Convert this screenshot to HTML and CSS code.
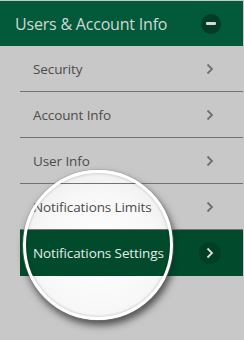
FILE: index.html
```html
<!DOCTYPE html>
<html>
<head>
<meta charset="utf-8">
<link rel="stylesheet" href="styles.css">
</head>
<body>
<div class="panel">
  <div class="header">
    <span class="title">Users &amp; Account Info</span>
    <span class="toggle"><span class="minus"></span></span>
  </div>
  <ul class="menu">
    <li class="item"><span class="label">Security</span><svg class="chev" viewBox="0 0 8 12" width="8" height="12"><path d="M1.5 1.5 L6 6 L1.5 10.5" fill="none" stroke="currentColor" stroke-width="1.8"/></svg></li>
    <li class="item"><span class="label">Account Info</span><svg class="chev" viewBox="0 0 8 12" width="8" height="12"><path d="M1.5 1.5 L6 6 L1.5 10.5" fill="none" stroke="currentColor" stroke-width="1.8"/></svg></li>
    <li class="item"><span class="label">User Info</span><svg class="chev" viewBox="0 0 8 12" width="8" height="12"><path d="M1.5 1.5 L6 6 L1.5 10.5" fill="none" stroke="currentColor" stroke-width="1.8"/></svg></li>
    <li class="item"><span class="label">Notifications Limits</span><svg class="chev" viewBox="0 0 8 12" width="8" height="12"><path d="M1.5 1.5 L6 6 L1.5 10.5" fill="none" stroke="currentColor" stroke-width="1.8"/></svg></li>
    <li class="item active"><span class="label">Notifications Settings</span><span class="chev-wrap"><svg class="chev" viewBox="0 0 8 12" width="8" height="12"><path d="M1.5 1.5 L6 6 L1.5 10.5" fill="none" stroke="currentColor" stroke-width="1.8"/></svg></span></li>
  </ul>
  <div class="lens-fill"></div>
  <div class="lens-ring"></div>
</div>
</body>
</html>
```
FILE: styles.css
```css
html, body {
  margin: 0;
  padding: 0;
  background: #c8c8c8;
  width: 244px;
  height: 340px;
  overflow: hidden;
}
body {
  padding-top: 1px;
  font-family: "Open Sans", "DejaVu Sans", sans-serif;
}
.panel {
  position: relative;
  width: 243px;
  height: 339px;
}
.header {
  height: 45px;
  background: #025a3b;
  display: flex;
  align-items: center;
  justify-content: space-between;
  padding: 0 22px 0 15px;
  box-sizing: border-box;
}
.title {
  color: #cfd8d4;
  font-size: 16px;
  letter-spacing: -0.2px;
}
.toggle {
  width: 20px;
  height: 20px;
  border-radius: 50%;
  background: #013d26;
  display: flex;
  align-items: center;
  justify-content: center;
}
.minus {
  width: 10px;
  height: 3px;
  border-radius: 1px;
  background: #d8d8d8;
}
.menu {
  list-style: none;
  margin: 0 0 0 20px;
  padding: 0;
  position: relative;
  z-index: 2;
}
.item {
  height: 45px;
  border-bottom: 1px solid #727272;
  display: flex;
  align-items: center;
  justify-content: space-between;
  padding: 0 29px 0 13px;
  color: #4c4c4c;
  font-size: 13.5px;
  letter-spacing: -0.1px;
}
.chev {
  color: #707070;
  display: block;
}
.item.active {
  background: #014a2c;
  border-bottom: none;
  height: 46px;
  color: #e4ece8;
  padding-right: 22px;
}
.chev-wrap {
  width: 22px;
  height: 22px;
  border-radius: 50%;
  background: #013f25;
  display: flex;
  align-items: center;
  justify-content: center;
}
.item.active .chev {
  color: #d8dcda;
}
.lens-fill {
  position: absolute;
  left: 23px;
  top: 169px;
  width: 150px;
  height: 150px;
  border-radius: 50%;
  background: radial-gradient(circle at 50% 55%, #ffffff 0%, #f7f7f7 55%, #e4e4e4 100%);
  box-shadow: 2px 5px 8px rgba(0, 0, 0, 0.5);
  z-index: 1;
}
.lens-ring {
  position: absolute;
  left: 23px;
  top: 169px;
  width: 150px;
  height: 150px;
  box-sizing: border-box;
  border-radius: 50%;
  border: 3px solid #ffffff;
  box-shadow: 0 0 0 1px rgba(150, 150, 150, 0.35), inset 0 0 3px rgba(0, 0, 0, 0.25), 2px 4px 6px rgba(0, 0, 0, 0.25);
  z-index: 3;
}
```
